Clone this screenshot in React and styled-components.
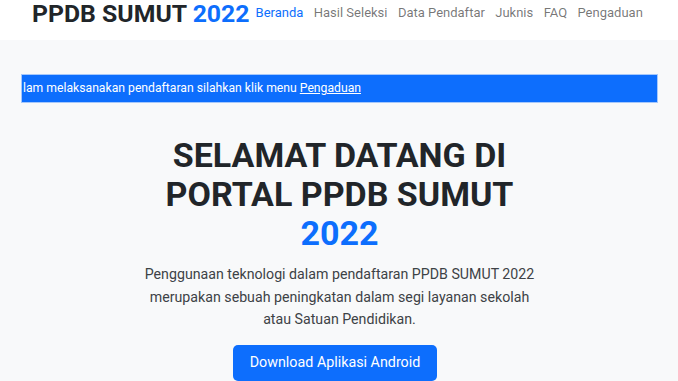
import React from 'react';
import styled, { createGlobalStyle } from 'styled-components';

const GlobalStyle = createGlobalStyle`
  html, body {
    margin: 0;
    padding: 0;
    background: #f8f9fa;
    font-family: Roboto, "Liberation Sans", Arial, sans-serif;
    color: #212529;
    overflow: hidden;
  }
`;

const Page = styled.div`
  width: 678px;
  height: 381px;
  overflow: hidden;
  background: #f8f9fa;
`;

const Header = styled.header`
  height: 40px;
  background: #ffffff;
  display: flex;
  align-items: flex-start;
  padding-left: 32px;
`;

const Brand = styled.a`
  font-size: 24.8px;
  line-height: 27px;
  font-weight: 700;
  color: #212529;
  text-decoration: none;
  white-space: nowrap;

  span {
    color: #0d6efd;
  }
`;

const Nav = styled.nav`
  display: flex;
  gap: 10.4px;
  margin-left: 6px;
  padding-top: 4px;
`;

const NavLink = styled.a`
  font-size: 13px;
  line-height: 18px;
  color: ${(p) => (p.$active ? '#0d6efd' : 'rgba(0, 0, 0, 0.55)')};
  text-decoration: none;
  white-space: nowrap;
`;

const Main = styled.main`
  padding: 35px 21px 0 22px;
  display: flex;
  flex-direction: column;
  align-items: center;
`;

const Ticker = styled.div`
  align-self: stretch;
  height: 27px;
  background: #0d6efd;
  color: #ffffff;
  font-size: 12.2px;
  line-height: 27px;
  overflow: hidden;
  white-space: nowrap;
  box-shadow: 0 0 0 1px rgba(13, 110, 253, 0.35);
`;

const TickerTrack = styled.span`
  position: relative;
  display: inline-block;
  padding-left: 1px;

  a {
    color: #ffffff;
    text-decoration: underline;
  }
`;

const TickerHidden = styled.span`
  position: absolute;
  right: 100%;
  top: 0;
`;

const Hero = styled.section`
  width: 398px;
  margin-top: 34px;
  text-align: center;
`;

const Title = styled.h1`
  margin: 0 0 10px;
  font-size: 34px;
  line-height: 39px;
  font-weight: 700;
  color: #212529;

  span {
    color: #0d6efd;
  }
`;

const Lead = styled.p`
  margin: 0 0 14px;
  font-size: 14.2px;
  line-height: 22.5px;
  color: #3d4246;
`;

const Button = styled.a`
  display: inline-block;
  margin-right: 9px;
  background: #0d6efd;
  color: #ffffff;
  font-size: 14.3px;
  line-height: 22px;
  padding: 6px 17px 8px;
  border-radius: 5px;
  text-decoration: none;
`;

const links = ['Beranda', 'Hasil Seleksi', 'Data Pendaftar', 'Juknis', 'FAQ', 'Pengaduan'];

const App = () => {
  return (
    <Page>
      <GlobalStyle />
      <Header>
        <Brand href="#">
          PPDB SUMUT <span>2022</span>
        </Brand>
        <Nav>
          {links.map((l, i) => (
            <NavLink key={l} href="#" $active={i === 0}>
              {l}
            </NavLink>
          ))}
        </Nav>
      </Header>
      <Main>
        <Ticker>
          <TickerTrack>
            <TickerHidden>Jika ada kendala da</TickerHidden>
            lam melaksanakan pendaftaran silahkan klik menu <a href="#">Pengaduan</a>
          </TickerTrack>
        </Ticker>
        <Hero>
          <Title>
            SELAMAT DATANG DI PORTAL PPDB SUMUT <span>2022</span>
          </Title>
          <Lead>
            Penggunaan teknologi dalam pendaftaran PPDB SUMUT 2022 merupakan sebuah
            peningkatan dalam segi layanan sekolah atau Satuan Pendidikan.
          </Lead>
          <Button href="#">Download Aplikasi Android</Button>
        </Hero>
      </Main>
    </Page>
  );
};

export default App;
